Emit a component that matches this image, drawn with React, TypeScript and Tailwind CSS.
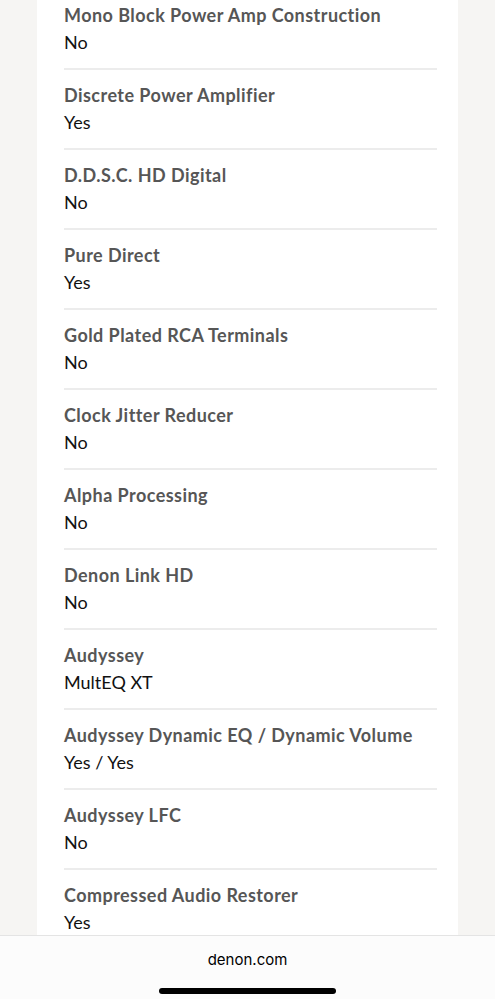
const specs: { label: string; value: string }[] = [
  { label: "Mono Block Power Amp Construction", value: "No" },
  { label: "Discrete Power Amplifier", value: "Yes" },
  { label: "D.D.S.C. HD Digital", value: "No" },
  { label: "Pure Direct", value: "Yes" },
  { label: "Gold Plated RCA Terminals", value: "No" },
  { label: "Clock Jitter Reducer", value: "No" },
  { label: "Alpha Processing", value: "No" },
  { label: "Denon Link HD", value: "No" },
  { label: "Audyssey", value: "MultEQ XT" },
  { label: "Audyssey Dynamic EQ / Dynamic Volume", value: "Yes / Yes" },
  { label: "Audyssey LFC", value: "No" },
  { label: "Compressed Audio Restorer", value: "Yes" },
];

export default function App() {
  return (
    <div className="relative h-[999px] w-[495px] overflow-hidden bg-[#f6f5f3]">
      {/* Spec card */}
      <div className="mx-[37px] h-full bg-white pl-[27px] pr-[21px]">
        <ul className="-mt-[10px]">
          {specs.map((spec) => (
            <li
              key={spec.label}
              className="flex flex-col gap-[3px] border-b-2 border-[#ececec] pb-[14px] pt-[13px]"
            >
              <span className="text-[18px] font-bold leading-6 tracking-[0.45px] text-[#565656] [font-family:Lato,'Noto_Sans',sans-serif]">
                {spec.label}
              </span>
              <span className="text-[18px] leading-6 text-[#111] [font-family:Lato,'Noto_Sans',sans-serif]">
                {spec.value}
              </span>
            </li>
          ))}
        </ul>
      </div>

      {/* Browser bottom bar */}
      <div className="absolute inset-x-0 bottom-0 flex h-[64px] flex-col items-center border-t border-[#e4e4e4] bg-[#fcfcfc]">
        <span className="mt-[14px] text-[15px] leading-5 text-black [font-family:Inter,'Liberation_Sans',sans-serif]">
          denon.com
        </span>
        <div className="mt-[18px] h-[6px] w-[177px] rounded-full bg-black" />
      </div>
    </div>
  );
}
